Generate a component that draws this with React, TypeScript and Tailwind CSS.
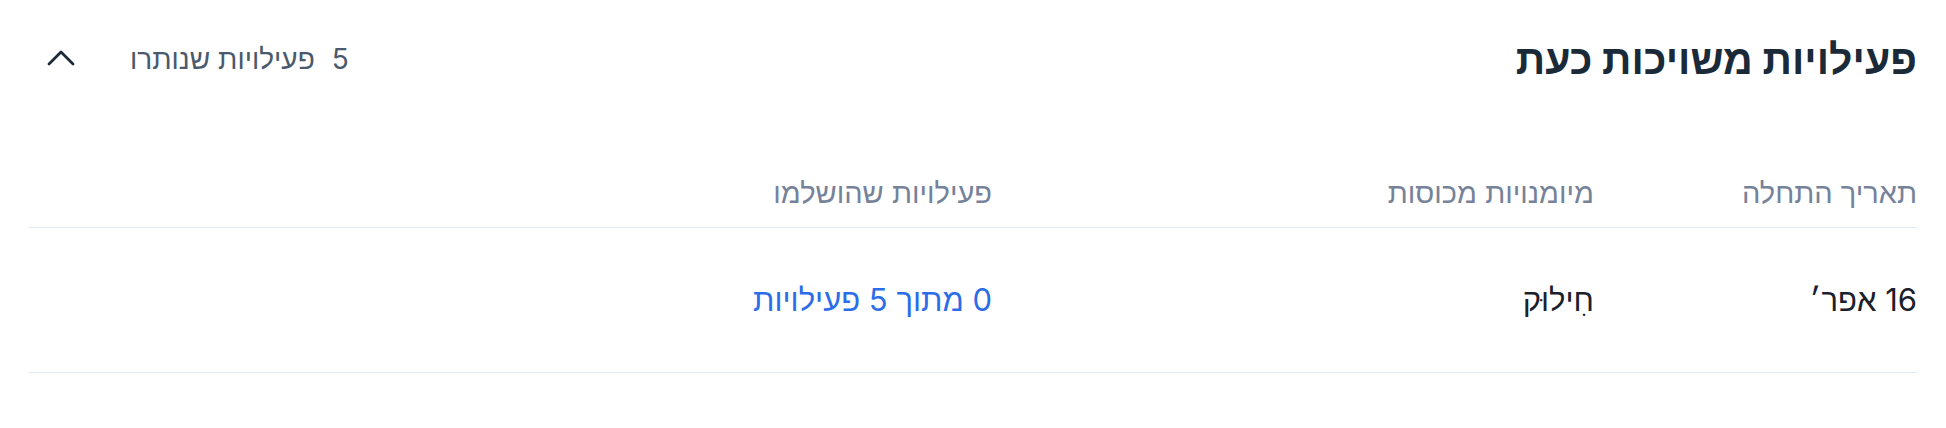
export default function App() {
  return (
    <div
      dir="rtl"
      className="w-[1946px] h-[428px] bg-white px-[29px] pt-[35px] font-['Inter','Liberation_Sans',sans-serif]"
    >
      <div className="flex items-center justify-between h-[48px]">
        <h2 className="text-[41px] leading-[48px] font-bold text-[#1b2a38]">פעילויות משויכות כעת</h2>
        <button className="flex items-center gap-[55px] pl-[18px]">
          <span className="flex items-center gap-[17px] text-[28px] leading-[36px] text-[#4a596c]">
            <span>5</span>
            <span>פעילויות שנותרו</span>
          </span>
          <svg width="28" height="16" viewBox="0 0 28 16" fill="none" className="text-[#1b2a38] -mt-[2px]">
            <path d="M2 14 L14 2 L26 14" stroke="currentColor" strokeWidth="2.8" strokeLinecap="round" strokeLinejoin="round" />
          </svg>
        </button>
      </div>

      <div className="mt-[92px] grid grid-cols-[323px_602px_1fr] border-b border-[#e2e8f0] pb-[16px] text-[29px] leading-[36px] text-[#76829a]">
        <div>תאריך התחלה</div>
        <div>מיומנויות מכוסות</div>
        <div>פעילויות שהושלמו</div>
      </div>

      <div className="grid grid-cols-[323px_602px_1fr] items-center h-[145px] border-b border-[#e2e8f0] text-[31px] leading-[38px] text-[#1a202c]">
        <div>16 אפר׳</div>
        <div>חִילוּק</div>
        <div className="text-[#2b6de8]">0 מתוך 5 פעילויות</div>
      </div>
    </div>
  );
}
